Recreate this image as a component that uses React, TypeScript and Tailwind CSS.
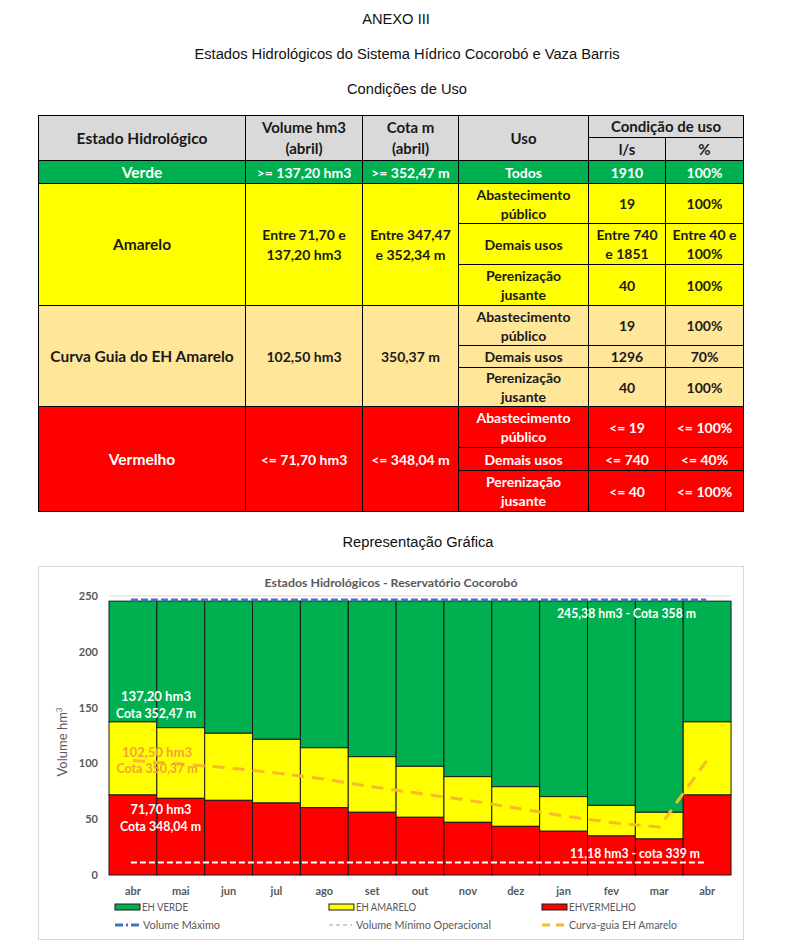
import React from "react";

const cell = "border border-black text-center align-middle font-bold p-0 leading-[19px] text-[14px]";

const meses = ["abr", "mai", "jun", "jul", "ago", "set", "out", "nov", "dez", "jan", "fev", "mar", "abr"];
const vermelho = [71.7, 68.7, 66.9, 64.5, 60.3, 56.2, 51.7, 47.2, 43.6, 39.2, 35, 32.3, 71.7];
const amarelo = [137.2, 132, 127, 121.6, 114, 106, 97.4, 88.1, 79.1, 70.2, 62.4, 56.2, 137.2];
const curva = [102.5, 99.5, 96, 91.5, 86, 79, 73, 67, 60, 53, 47, 43, 103];

const X0 = 109;
const BW = 47.85;
const Y0 = 875;
const K = 1.116;
const yv = (v: number) => Y0 - v * K;
const cx = (i: number) => X0 + BW * (i + 0.5);

const Grafico = () => {
  const gray = "#595959";
  return (
    <svg width={704} height={372} className="block">
      <g transform="translate(-39 -567)" fontFamily="Lato, 'Open Sans', sans-serif">
        <text x={391} y={587} textAnchor="middle" fontSize={12} fontWeight={700} fill={gray} textLength={253} lengthAdjust="spacingAndGlyphs">
          Estados Hidrológicos - Reservatório Cocorobó
        </text>
        <line x1={X0} x2={731} y1={596} y2={596} stroke="#d9d9d9" />
        {[250, 200, 150, 100, 50, 0].map((v) => (
          <text key={v} x={98} y={yv(v) + 4} textAnchor="end" fontSize={11} fontWeight={700} fill={gray}>
            {v}
          </text>
        ))}
        <text
          transform="translate(67 742) rotate(-90)"
          textAnchor="middle"
          fontSize={13}
          fill={gray}
        >
          Volume hm<tspan dy={-5} fontSize={8}>3</tspan>
        </text>
        {meses.map((m, i) => {
          const x = X0 + BW * i;
          return (
            <g key={i}>
              <rect x={x} y={yv(245.38)} width={BW} height={yv(amarelo[i]) - yv(245.38)} fill="#00b050" stroke="#1a1a1a" strokeWidth={1} />
              <rect x={x} y={yv(amarelo[i])} width={BW} height={yv(vermelho[i]) - yv(amarelo[i])} fill="#ffff00" stroke="#1a1a1a" strokeWidth={1} />
              <rect x={x} y={yv(vermelho[i])} width={BW} height={Y0 - yv(vermelho[i])} fill="#ff0000" stroke="#1a1a1a" strokeWidth={1} />
              <text x={cx(i)} y={895} textAnchor="middle" fontSize={11} fontWeight={700} fill={gray}>
                {m}
              </text>
            </g>
          );
        })}
        <line x1={cx(0) - 2} x2={cx(12) - 1} y1={600} y2={600} stroke="#4472c4" strokeWidth={3} strokeDasharray="7 3" />
        <line x1={cx(0) - 2} x2={cx(12) - 1} y1={862.5} y2={862.5} stroke="#ffffff" strokeWidth={2} strokeDasharray="6 3" />
        <polyline
          points={curva.map((v, i) => `${cx(i)},${yv(v)}`).join(" ")}
          fill="none"
          stroke="#f8b92b"
          strokeWidth={3}
          strokeDasharray="12 8"
        />
        <g fontSize={13} fontWeight={700} textAnchor="middle">
          <text x={156} y={701} fill="#ffffff" textLength={70} lengthAdjust="spacingAndGlyphs">137,20  hm3</text>
          <text x={156} y={718} fill="#ffffff" textLength={80} lengthAdjust="spacingAndGlyphs">Cota 352,47 m</text>
          <text x={157} y={757} fill="#f4a23a" textLength={70} lengthAdjust="spacingAndGlyphs">102,50  hm3</text>
          <text x={157} y={773} fill="#f4a23a" textLength={81} lengthAdjust="spacingAndGlyphs">Cota 350,37 m</text>
          <text x={161} y={814} fill="#ffffff" textLength={61} lengthAdjust="spacingAndGlyphs">71,70  hm3</text>
          <text x={160.5} y={831} fill="#ffffff" textLength={81} lengthAdjust="spacingAndGlyphs">Cota 348,04 m</text>
          <text x={626.5} y={617.5} fill="#ffffff" textLength={139} lengthAdjust="spacingAndGlyphs">245,38 hm3 - Cota 358 m</text>
          <text x={635} y={857.5} fill="#ffffff" textLength={130} lengthAdjust="spacingAndGlyphs">11,18 hm3 - cota 339 m</text>
        </g>
        <g fontSize={11} fill={gray}>
          <rect x={115} y={904} width={25} height={6} fill="#00b050" stroke="#1a1a1a" />
          <text x={142} y={911} textLength={46} lengthAdjust="spacingAndGlyphs">EH VERDE</text>
          <rect x={329} y={904} width={25} height={6} fill="#ffff00" stroke="#1a1a1a" />
          <text x={356} y={911} textLength={60} lengthAdjust="spacingAndGlyphs">EH AMARELO</text>
          <rect x={542} y={904} width={25} height={6} fill="#ff0000" stroke="#1a1a1a" />
          <text x={569} y={911} textLength={67} lengthAdjust="spacingAndGlyphs">EHVERMELHO</text>

          <line x1={115} x2={142} y1={925} y2={925} stroke="#4472c4" strokeWidth={3} strokeDasharray="8 3 2 3" />
          <text x={143} y={929} textLength={77} lengthAdjust="spacingAndGlyphs">Volume Máximo</text>
          <line x1={329} x2={352} y1={925} y2={925} stroke="#d0d0d0" strokeWidth={2} strokeDasharray="4 3" />
          <text x={356} y={929} textLength={135} lengthAdjust="spacingAndGlyphs">Volume Mínimo Operacional</text>
          <line x1={542} x2={567} y1={925} y2={925} stroke="#f8b92b" strokeWidth={3} strokeDasharray="8 6" />
          <text x={569} y={929} textLength={108} lengthAdjust="spacingAndGlyphs">Curva-guia EH Amarelo</text>
        </g>
      </g>
    </svg>
  );
};

export default function App() {
  const yel = "bg-[#ffff00] text-[#1a1a1a]";
  const cur = "bg-[#ffe699] text-[#1a1a1a]";
  const red = "bg-[#ff0000] text-white";
  return (
    <div className="w-[789px] h-[947px] bg-white font-['Liberation_Sans',Arial,sans-serif] text-[14.7px] text-[#111]">
      <div className="pt-[11px] leading-[17px] pl-[3px] text-center">ANEXO III</div>
      <div className="mt-[18px] leading-[17px] pl-[25px] text-center">
        Estados Hidrológicos do Sistema Hídrico Cocorobó e Vaza Barris
      </div>
      <div className="mt-[18px] leading-[17px] pl-[25px] text-center">Condições de Uso</div>

      <div className="mt-[17px] pl-[38px]">
        <table className="border-collapse table-fixed w-[706px] font-['Lato',sans-serif]">
          <colgroup>
            <col className="w-[207px]" />
            <col className="w-[117px]" />
            <col className="w-[96px]" />
            <col className="w-[130px]" />
            <col className="w-[77px]" />
            <col className="w-[78px]" />
          </colgroup>
          <tbody>
            <tr className="h-[22px] bg-[#d9d9d9] text-[#1a1a1a]">
              <td rowSpan={2} className={`${cell} text-[15.5px]`}>Estado Hidrológico</td>
              <td rowSpan={2} className={`${cell} text-[15px] leading-[21px]`}>Volume hm3<br />(abril)</td>
              <td rowSpan={2} className={`${cell} text-[15px] leading-[21px]`}>Cota m<br />(abril)</td>
              <td rowSpan={2} className={`${cell} text-[15px]`}>Uso</td>
              <td colSpan={2} className={`${cell} text-[15px]`}>Condição de uso</td>
            </tr>
            <tr className="h-[23px] bg-[#d9d9d9] text-[#1a1a1a]">
              <td className={`${cell} text-[15px]`}>l/s</td>
              <td className={`${cell} text-[15px]`}>%</td>
            </tr>
            <tr className="h-[23px] bg-[#00b050] text-white">
              <td className={`${cell} text-[15.5px]`}>Verde</td>
              <td className={cell}>&gt;= 137,20 hm3</td>
              <td className={cell}>&gt;= 352,47 m</td>
              <td className={cell}>Todos</td>
              <td className={cell}>1910</td>
              <td className={cell}>100%</td>
            </tr>

            <tr className={`h-[40px] ${yel}`}>
              <td rowSpan={3} className={`${cell} text-[15.5px]`}>Amarelo</td>
              <td rowSpan={3} className={`${cell} leading-[20px]`}>Entre 71,70 e<br />137,20 hm3</td>
              <td rowSpan={3} className={`${cell} leading-[20px]`}>Entre 347,47<br />e 352,34 m</td>
              <td className={cell}>Abastecimento<br />público</td>
              <td className={cell}>19</td>
              <td className={cell}>100%</td>
            </tr>
            <tr className={`h-[41px] ${yel}`}>
              <td className={cell}>Demais usos</td>
              <td className={cell}>Entre 740<br />e 1851</td>
              <td className={cell}>Entre 40 e<br />100%</td>
            </tr>
            <tr className={`h-[41px] ${yel}`}>
              <td className={cell}>Perenização<br />jusante</td>
              <td className={cell}>40</td>
              <td className={cell}>100%</td>
            </tr>

            <tr className={`h-[40px] ${cur}`}>
              <td rowSpan={3} className={`${cell} text-[15.5px]`}>Curva Guia do EH Amarelo</td>
              <td rowSpan={3} className={cell}>102,50 hm3</td>
              <td rowSpan={3} className={cell}>350,37 m</td>
              <td className={cell}>Abastecimento<br />público</td>
              <td className={cell}>19</td>
              <td className={cell}>100%</td>
            </tr>
            <tr className={`h-[22px] ${cur}`}>
              <td className={cell}>Demais usos</td>
              <td className={cell}>1296</td>
              <td className={cell}>70%</td>
            </tr>
            <tr className={`h-[39px] ${cur}`}>
              <td className={cell}>Perenização<br />jusante</td>
              <td className={cell}>40</td>
              <td className={cell}>100%</td>
            </tr>

            <tr className={`h-[41px] ${red}`}>
              <td rowSpan={3} className={`${cell} text-[15.5px]`}>Vermelho</td>
              <td rowSpan={3} className={cell}>&lt;= 71,70 hm3</td>
              <td rowSpan={3} className={cell}>&lt;= 348,04 m</td>
              <td className={cell}>Abastecimento<br />público</td>
              <td className={cell}>&lt;= 19</td>
              <td className={cell}>&lt;= 100%</td>
            </tr>
            <tr className={`h-[23px] ${red}`}>
              <td className={cell}>Demais usos</td>
              <td className={cell}>&lt;= 740</td>
              <td className={cell}>&lt;= 40%</td>
            </tr>
            <tr className={`h-[41px] ${red}`}>
              <td className={cell}>Perenização<br />jusante</td>
              <td className={cell}>&lt;= 40</td>
              <td className={cell}>&lt;= 100%</td>
            </tr>
          </tbody>
        </table>
      </div>

      <div className="mt-[22px] leading-[17px] pl-[47px] text-center">Representação Gráfica</div>

      <div className="mt-[15px] ml-[38px] w-[706px] h-[374px] border border-[#d9d9d9]">
        <Grafico />
      </div>
    </div>
  );
}
